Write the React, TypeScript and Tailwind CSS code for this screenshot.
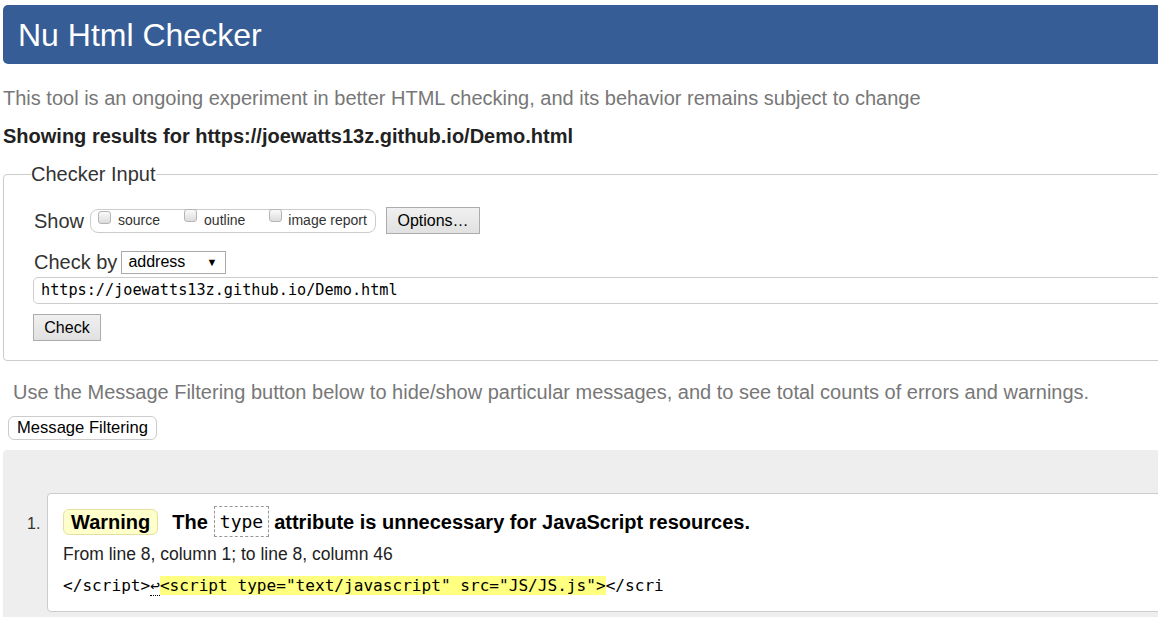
import React from "react";

const sans = "font-['Liberation_Sans',Arial,sans-serif]";
const mono = "font-['DejaVu_Sans_Mono',Consolas,monospace]";

function Cb() {
  return (
    <span className="inline-block w-[13px] h-[13px] rounded-[3px] border border-[#b5b5b5] bg-gradient-to-b from-[#fafafa] to-[#dcdcdc] relative -top-[3px]" />
  );
}

function Btn({ children, className = "" }: { children: React.ReactNode; className?: string }) {
  return (
    <span
      className={`inline-flex items-center justify-center h-[27px] border border-[#acacac] bg-gradient-to-b from-[#f0f0f0] to-[#e1e1e1] text-[16px] text-black ${className}`}
    >
      {children}
    </span>
  );
}

export default function App() {
  return (
    <div className={`w-[1158px] h-[617px] overflow-hidden bg-white ${sans}`}>
      <div className="w-[1300px] pl-[3px]">
        <div className="mt-[5px] h-[59px] bg-[#365d96] rounded-l-[5px] pl-[15px] flex items-center text-white text-[32px]">
          Nu Html Checker
        </div>
        <p className="mt-[22px] leading-[24px] text-[20px] text-[#777]">
          This tool is an ongoing experiment in better HTML checking, and its behavior remains subject to change
        </p>
        <p className="mt-[14px] leading-[24px] text-[20px] font-bold text-[#222]">
          Showing results for https://joewatts13z.github.io/Demo.html
        </p>
        <fieldset className="mt-[14px] border border-[#cccccc] rounded-[4px] pl-[29px] pb-[19px] text-[#333]">
          <legend className="-ml-[2px] text-[20px] leading-[24px] text-[#333]">Checker Input</legend>
          <div className="mt-[21px] h-[27px] flex items-center">
            <span className="text-[20px] mr-[6px] ml-[1px]">Show</span>
            <span className="h-[24px] w-[286px] border border-[#cccccc] rounded-[8px] flex items-center pl-[7px] text-[14px] text-[#333]">
              <Cb />
              <span className="ml-[7px]">source</span>
              <span className="ml-[24px]"><Cb /></span>
              <span className="ml-[7px]">outline</span>
              <span className="ml-[24px]"><Cb /></span>
              <span className="ml-[6px]">image report</span>
            </span>
            <Btn className="ml-[10px] w-[94px]">Options…</Btn>
          </div>
          <div className="mt-[16px] h-[24px] flex items-center">
            <span className="text-[20px] ml-[1px] mr-[4px]">Check by</span>
            <span className="h-[23px] w-[105px] border border-[#a9a9a9] flex items-center pl-[6px] pr-[8px] justify-between text-[16px] text-black">
              <span>address</span>
              <span className="text-[11px]">▼</span>
            </span>
          </div>
          <div className={`mt-[3px] h-[27px] border border-[#cccccc] rounded-[5px] flex items-center pl-[7px] text-[15.2px] text-black ${mono}`}>
            https://joewatts13z.github.io/Demo.html
          </div>
          <div className="mt-[10px] flex">
            <Btn className="w-[68px]">Check</Btn>
          </div>
        </fieldset>
        <p className="mt-[19px] pl-[10px] leading-[24px] text-[20px] text-[#777]">
          Use the Message Filtering button below to hide/show particular messages, and to see total counts of errors and warnings.
        </p>
        <div className="mt-[12px] ml-[5px] flex">
          <span className="h-[24px] px-[8px] border border-[#cccccc] rounded-[6px] flex items-center text-[16.6px] text-black bg-white">
            Message Filtering
          </span>
        </div>
        <div className="mt-[10px] bg-[#eeeeee] rounded-tl-[4px] pt-[43px] pl-[24px] h-[200px]">
          <div className="flex">
            <div className="w-[20px] pt-[19px] text-[16px] text-[#333]">1.</div>
            <div className="flex-1 border border-[#cccccc] rounded-l-[4px] bg-white pl-[15px] pt-[12px] pb-[14px]">
              <div className="flex items-center h-[31px] text-[20px] font-bold text-black">
                <span className="h-[26px] px-[7px] bg-[#ffffcc] border border-[#e5e0a0] rounded-[6px] flex items-center">Warning</span>
                <span className="ml-[14px]">The</span>
                <span className={`ml-[6px] h-[31px] px-[5px] border border-dashed border-[#999] flex items-center font-normal text-[18px] ${mono}`}>type</span>
                <span className="ml-[5px]">attribute is unnecessary for JavaScript resources.</span>
              </div>
              <div className="mt-[6px] leading-[22px] text-[17.5px] text-[#222]">
                From line 8, column 1; to line 8, column 46
              </div>
              <div className={`mt-[10px] leading-[22px] text-[16.1px] text-black whitespace-pre ${mono}`}>
                {"</script>"}
                <span className="border-b border-dotted border-black">↩</span>
                <span className="bg-[#ffff80]">{'<script type="text/javascript" src="JS/JS.js">'}</span>
                {"</scri"}
              </div>
            </div>
          </div>
        </div>
      </div>
    </div>
  );
}
